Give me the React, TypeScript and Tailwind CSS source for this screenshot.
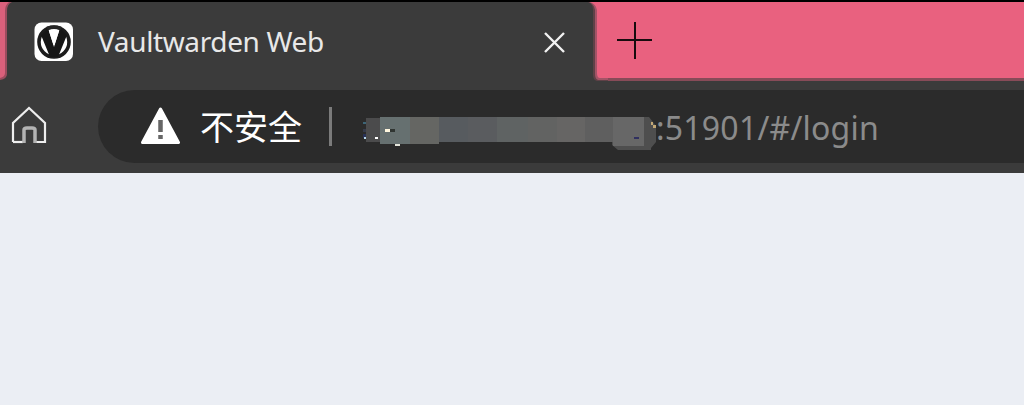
import React from "react";

const blocks: [number, number, number, number, string][] = [
  [3, 3, 14, 24, "#4b4b4c"],
  [17, 2, 30, 27, "#667070"],
  [47, 2, 29, 27, "#656663"],
  [76, 2, 29, 25, "#575b5f"],
  [105, 2, 29, 25, "#5a5c5f"],
  [134, 2, 31, 25, "#5f6363"],
  [165, 2, 29, 25, "#626362"],
  [194, 2, 28, 25, "#666564"],
  [222, 2, 28, 25, "#5f5f5f"],
  [250, 2, 31, 29, "#676767"],
  [0, 7, 3, 2, "#3d6577"],
  [0, 14, 3, 3, "#363b4b"],
  [0, 19, 3, 4, "#293257"],
  [1, 22, 2, 2, "#b8d9ef"],
  [12, 22, 3, 2, "#ffffff"],
  [22, 14, 5, 3, "#fff7df"],
  [27, 14, 5, 3, "#303532"],
  [32, 29, 5, 2, "#e5e5dc"],
  [271, 22, 5, 2, "#303060"],
];

function Favicon() {
  return (
    <svg className="mt-0.5 size-10 shrink-0" viewBox="0 0 40 40">
      <rect x="0.500" y="0.500" width="38.500" height="38.500" rx="7" fill="#fff" />
      <circle cx="20" cy="20" r="15" fill="#fff" stroke="#1c1c1c" strokeWidth="3.600" />
      <path d="M7 13 14 6l6 19 6-19 7 7-9 22h-8z" fill="#161616" />
      <path d="M15 9h10l-4.500 14h-1z" fill="#fff" />
      <path d="M13 6.500q7-2.500 14 0" fill="none" stroke="#262626" strokeWidth="3.500" />
    </svg>
  );
}

export default function App() {
  return (
    <div className="flex h-[405px] w-[1024px] flex-col overflow-hidden bg-[#ebeef4] font-['Noto_Sans','Noto_Sans_CJK_SC',sans-serif]">
      <div className="h-0.5 shrink-0 bg-black" />
      <header className="flex h-[79px] shrink-0 bg-[#3b3b3b]">
        <svg className="h-[79px] w-3 shrink-0" viewBox="0 0 12 79">
          <path d="M0 0h12Q7 2 7 9v63q0 5-7 6z" fill="#9b4c5e" />
          <path d="M0 0h9Q5 3 5 9v62q0 4-5 5z" fill="#da607b" />
        </svg>
        <div className="flex w-[576px] items-center pb-0.5 pl-[22px] pr-5">
          <Favicon />
          <span className="ml-6 whitespace-nowrap text-[28px] leading-10 tracking-[-0.370px] text-[#e8e8e8]">Vaultwarden Web</span>
          <svg className="ml-auto mt-[3px] size-7" viewBox="0 0 28 28" fill="none" stroke="#f2f2f2" strokeWidth="2.400">
            <path d="m5 5 19 19M24 5 5 24" />
          </svg>
        </div>
        <div className="flex grow">
          <svg className="h-[79px] w-5 shrink-0" viewBox="0 0 20 79">
            <path d="M0 0h20v79H9q-4-1-4-6V8Q5 2 0 0z" fill="#5f4147" />
            <path d="M1 0h19v78H10q-3-1-3-6V8Q6 2 1 0z" fill="#a35467" />
            <path d="M2 0h18v76h-8q-3 0-3-5V8Q8 2 2 0z" fill="#e9617f" />
          </svg>
          <div className="h-[79px] grow border-b-[3px] border-[#874b58] bg-[#e9617f] pl-1.5 pt-5">
            <svg className="size-10" viewBox="0 0 40 40" stroke="#180b0e" strokeWidth="2">
              <path d="M3 18h35M21 0v37" />
            </svg>
          </div>
        </div>
      </header>
      <nav className="flex h-[92px] shrink-0 items-center bg-[#3b3b3b] pb-0.5">
        <svg className="ml-2.5 h-10 w-10 shrink-0" viewBox="0 0 40 40" fill="none" stroke="#eee" strokeWidth="2.200">
          <path d="M3 36V17L19 2l16 15v19H25" />
          <path d="M3 36h10" />
          <path d="M14 37V24q0-2 3-2h5q3 0 3 2v13" stroke="#b4b4b4" strokeWidth="3.500" />
        </svg>
        <div className="ml-12 flex h-[73px] grow items-center rounded-l-full bg-[#2b2b2b] pl-[42px]">
          <svg className="size-10 shrink-0" viewBox="0 0 40 40">
            <path d="M20.500 3 38.500 36.500h-36z" fill="#fff" stroke="#fff" strokeWidth="3" strokeLinejoin="round" />
            <path d="M20.500 14v12m0 3v4" stroke="#666" strokeWidth="4.500" />
          </svg>
          <span className="ml-5 font-['Noto_Sans_CJK_SC',sans-serif] text-[34px] leading-10 text-white">不安全</span>
          <span className="ml-[27px] h-[39px] w-[3px] bg-[#7b7b7b]" />
          <svg className="ml-[31px] mt-[13px] h-9 w-[293px] shrink-0" viewBox="0 0 293 36">
            <path d="M281 2h5l7 9v16l-5 6v2h-33l-6-5v-4h32z" fill="#4e4e4e" />
            {blocks.map(([x, y, width, height, fill]) => (
              <rect key={`${x}-${y}`} x={x} y={y} width={width} height={height} fill={fill} />
            ))}
            <path d="M288 7h2v3h3v3h-3v-3h-2z" fill="#c2a875" />
          </svg>
          <span className="mt-[3px] whitespace-nowrap text-[32px] leading-10 tracking-[0.220px] text-[#8b8b8b]">:51901/#/login</span>
        </div>
      </nav>
      <main className="grow" />
    </div>
  );
}
